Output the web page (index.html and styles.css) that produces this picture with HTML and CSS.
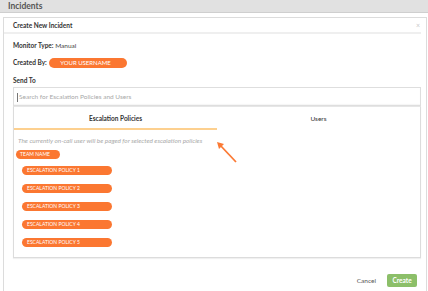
FILE: index.html
```html
<!DOCTYPE html>
<html lang="en">
<head>
    <meta charset="UTF-8">
    <title>Incidents</title>
    <link rel="stylesheet" href="styles.css">
</head>
<body>
    <div class="topbar">Incidents</div>

    <div class="modal">
        <!-- Modal header -->
        <div class="modal-head">
            <span class="modal-title">Create New Incident</span>
            <span class="close">&times;</span>
        </div>

        <div class="row monitor"><b>Monitor Type:</b> Manual</div>
        <div class="row created"><b>Created By:</b> <span class="pill user-pill">YOUR USERNAME</span></div>
        <div class="row label"><b>Send To</b></div>
        <div class="search">Search for Escalation Policies and Users</div>

        <!-- Tabs panel -->
        <div class="panel">
            <div class="tabs">
                <div class="tab active">Escalation Policies</div>
                <div class="tab">Users</div>
            </div>
            <div class="hint">The currently on-call user will be paged for selected escalation policies</div>
            <div class="team"><span class="pill team-pill">TEAM NAME</span></div>
            <ul class="policies">
                <li><span class="pill policy">ESCALATION POLICY 1</span></li>
                <li><span class="pill policy">ESCALATION POLICY 2</span></li>
                <li><span class="pill policy">ESCALATION POLICY 3</span></li>
                <li><span class="pill policy">ESCALATION POLICY 4</span></li>
                <li><span class="pill policy">ESCALATION POLICY 5</span></li>
            </ul>
            <svg class="arrow" width="24" height="24" viewBox="0 0 24 24">
                <line x1="21" y1="22" x2="5" y2="5" stroke="#fb7a35" stroke-width="1.8"/>
                <polygon points="2,2 9,4 4,9" fill="#fb7a35"/>
            </svg>
        </div>

        <!-- Footer -->
        <div class="footer">
            <span class="cancel">Cancel</span>
            <span class="create">Create</span>
        </div>
    </div>
</body>
</html>
```

FILE: styles.css
```css
/* Global */
body {
    margin: 0;
    font-family: 'Lato', 'Open Sans', sans-serif;
    background: #ffffff;
    color: #444;
    overflow: hidden;
}

.topbar {
    height: 12px;
    line-height: 12px;
    background: #e1e1e1;
    border-bottom: 1px solid #cfcfcf;
    padding-left: 8px;
    font-size: 8.5px;
    font-weight: bold;
    color: #555;
}

/* Modal */
.modal {
    box-sizing: border-box;
    margin: 4px 1px 0 3px;
    border: 1px solid #dcdcdc;
    border-bottom: none;
    padding: 0 5px 0 9px;
    height: 274px;
    font-size: 6.5px;
}

.modal-head {
    display: flex;
    justify-content: space-between;
    align-items: center;
    height: 14px;
    margin-left: -9px;
    padding-left: 9px;
    border-bottom: 2px solid #efefef;
}

.modal-title {
    font-weight: bold;
    color: #333;
}

.close {
    color: #c8c8c8;
    font-size: 7px;
    margin-right: 1px;
}

.row {
    color: #444;
    height: 10px;
    line-height: 10px;
}

.row b {
    color: #333;
}

.monitor {
    margin-top: 7px;
}

.created {
    margin-top: 7px;
}

.label {
    margin-top: 8px;
}

.search {
    margin-top: 1px;
    height: 17px;
    line-height: 17px;
    border: 1px solid #dedede;
    padding-left: 3px;
    color: #a8a8a8;
    box-shadow: inset 0 -1px 1px rgba(0, 0, 0, 0.04);
}

.search::before {
    content: "";
    display: inline-block;
    width: 1px;
    height: 9px;
    background: #777;
    vertical-align: middle;
    margin-right: 1px;
}

/* Pills */
.pill {
    display: inline-block;
    background: #fb7731;
    color: #fff;
    border-radius: 6px;
    font-size: 5px;
    text-align: center;
    vertical-align: middle;
}

.user-pill {
    width: 78px;
    height: 10px;
    line-height: 10px;
    margin-left: 1px;
    font-size: 6px;
    text-indent: -6px;
}

/* Panel with tabs */
.panel {
    position: relative;
    height: 150px;
    border: 1px solid #dcdcdc;
    border-top: 1px solid #e6e6e6;
    box-shadow: 0 1px 1px rgba(0, 0, 0, 0.06);
}

.tabs {
    display: flex;
    height: 23px;
}

.tab {
    flex: 1;
    text-align: center;
    line-height: 23px;
    color: #333;
}

.tab.active {
    font-weight: bold;
    border-bottom: 2px solid #fdd08f;
}

.hint {
    margin-top: 7px;
    padding-left: 4px;
    font-style: italic;
    color: #aaa;
    font-size: 6.4px;
}

.team {
    margin-top: 6px;
    padding-left: 2px;
}

.team-pill {
    width: 44px;
    height: 9px;
    line-height: 9px;
    text-indent: -6px;
}

.policies {
    list-style: none;
    margin: 7px 0 0;
    padding: 0 0 0 8px;
    display: flex;
    flex-direction: column;
    gap: 9px;
}

.policies li {
    height: 9px;
}

.policy {
    width: 90px;
    height: 9px;
    line-height: 9px;
    text-align: left;
    text-indent: 5px;
}

.arrow {
    position: absolute;
    left: 201px;
    top: 33px;
}

/* Footer */
.footer {
    display: flex;
    justify-content: flex-end;
    align-items: center;
    gap: 11px;
    margin-top: 16px;
    padding-right: 4px;
}

.cancel {
    color: #555;
}

.create {
    background: #8cbf69;
    color: #fff;
    font-weight: bold;
    border-radius: 2px;
    width: 30px;
    height: 13px;
    line-height: 13px;
    text-align: center;
}
```
